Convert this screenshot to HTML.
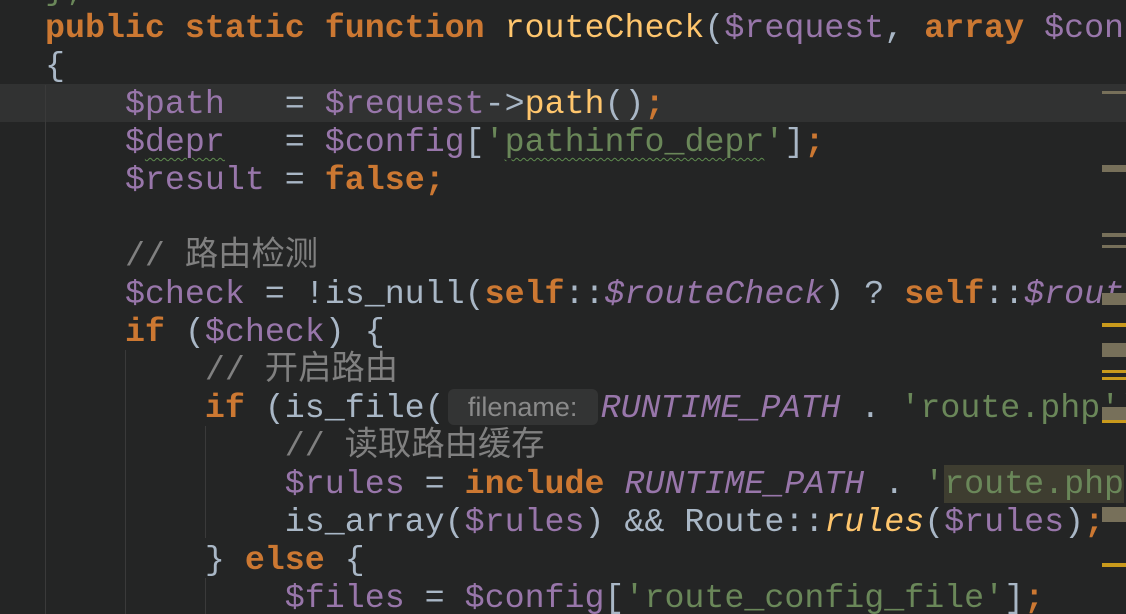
<!DOCTYPE html>
<html><head><meta charset="utf-8"><style>
html,body{margin:0;padding:0;width:1126px;height:614px;overflow:hidden;background:#242525;}
.ed{position:absolute;left:0;top:0;width:1126px;height:614px;overflow:hidden;}
.cur{position:absolute;left:0;top:84px;width:1126px;height:38px;background:#313232;}
.g{position:absolute;width:1px;background:#3a3a3a;}
.l{position:absolute;left:45px;height:38px;line-height:38px;margin-top:1px;white-space:pre;font-family:"Liberation Mono","Noto Sans CJK SC",monospace;font-size:33.3px;color:#a9b7c6;}
.k{color:#cc7832;font-weight:bold}
.v{color:#9876aa}
.s{color:#6a8759}
.f{color:#ffc66d}
.c{color:#808080}
.i{font-style:italic}
.w{text-decoration:underline wavy #5f8c4f;text-decoration-thickness:1px;text-underline-offset:6px}
.h{display:inline-block;width:150px;height:36px;vertical-align:top;margin:0 3px 0 3px;background:#333434;border-radius:6px;color:#8a8a8a;font-family:"Liberation Sans",sans-serif;font-size:27px;line-height:36px;text-align:center;}
.hl{background:#3e3d30}
.m{position:absolute;left:1102px;width:24px;}
</style></head><body><div class="ed">
<div class="cur"></div>
<div class="g" style="left:45px;top:85px;height:529px"></div>
<div class="g" style="left:125px;top:350px;height:264px"></div>
<div class="g" style="left:205px;top:426px;height:112px"></div>
<div class="g" style="left:205px;top:578px;height:36px"></div>
<div class="l" style="top:-30px"><span class="s">};</span></div>
<div class="l" style="top:8px"><span class="k">public static function </span><span class="f">routeCheck</span>(<span class="v">$request</span>, <span class="k">array </span><span class="v">$config</span>)</div>
<div class="l" style="top:46px">{</div>
<div class="l" style="top:84px">    <span class="v">$path</span>   = <span class="v">$request</span>-&gt;<span class="f">path</span>()<span class="k">;</span></div>
<div class="l" style="top:122px">    <span class="v">$<span class="w">depr</span></span>   = <span class="v">$config</span>[<span class="s">'<span class="w">pathinfo_depr</span>'</span>]<span class="k">;</span></div>
<div class="l" style="top:160px">    <span class="v">$result</span> = <span class="k">false;</span></div>
<div class="l" style="top:236px">    <span class="c">// 路由检测</span></div>
<div class="l" style="top:274px">    <span class="v">$check</span> = !is_null(<span class="k">self</span>::<span class="v i">$routeCheck</span>) ? <span class="k">self</span>::<span class="v i">$routeCheck</span></div>
<div class="l" style="top:312px">    <span class="k">if</span> (<span class="v">$check</span>) {</div>
<div class="l" style="top:350px">        <span class="c">// 开启路由</span></div>
<div class="l" style="top:388px">        <span class="k">if</span> (is_file(<span class="h">filename:</span><span class="v i">RUNTIME_PATH</span> . <span class="s">'route.php'</span>)) {</div>
<div class="l" style="top:426px">            <span class="c">// 读取路由缓存</span></div>
<div class="l" style="top:464px">            <span class="v">$rules</span> = <span class="k">include </span><span class="v i">RUNTIME_PATH</span> . <span class="s">'<span class="hl">route.php</span>'</span><span class="k">;</span></div>
<div class="l" style="top:502px">            is_array(<span class="v">$rules</span>) &amp;&amp; Route::<span class="f i">rules</span>(<span class="v">$rules</span>)<span class="k">;</span></div>
<div class="l" style="top:540px">        } <span class="k">else</span> {</div>
<div class="l" style="top:578px">            <span class="v">$files</span> = <span class="v">$config</span>[<span class="s">'route_config_file'</span>]<span class="k">;</span></div>
<div class="m" style="top:91px;height:3px;background:#77705a"></div>
<div class="m" style="top:165px;height:7px;background:#77705a"></div>
<div class="m" style="top:233px;height:4px;background:#77705a"></div>
<div class="m" style="top:245px;height:3px;background:#77705a"></div>
<div class="m" style="top:293px;height:12px;background:#77705a"></div>
<div class="m" style="top:323px;height:4px;background:#c99a1c"></div>
<div class="m" style="top:343px;height:14px;background:#77705a"></div>
<div class="m" style="top:370px;height:3px;background:#c99a1c"></div>
<div class="m" style="top:377px;height:3px;background:#c99a1c"></div>
<div class="m" style="top:407px;height:13px;background:#77705a"></div>
<div class="m" style="top:420px;height:3px;background:#c99a1c"></div>
<div class="m" style="top:507px;height:15px;background:#77705a"></div>
<div class="m" style="top:563px;height:4px;background:#c99a1c"></div>
</div></body></html>
